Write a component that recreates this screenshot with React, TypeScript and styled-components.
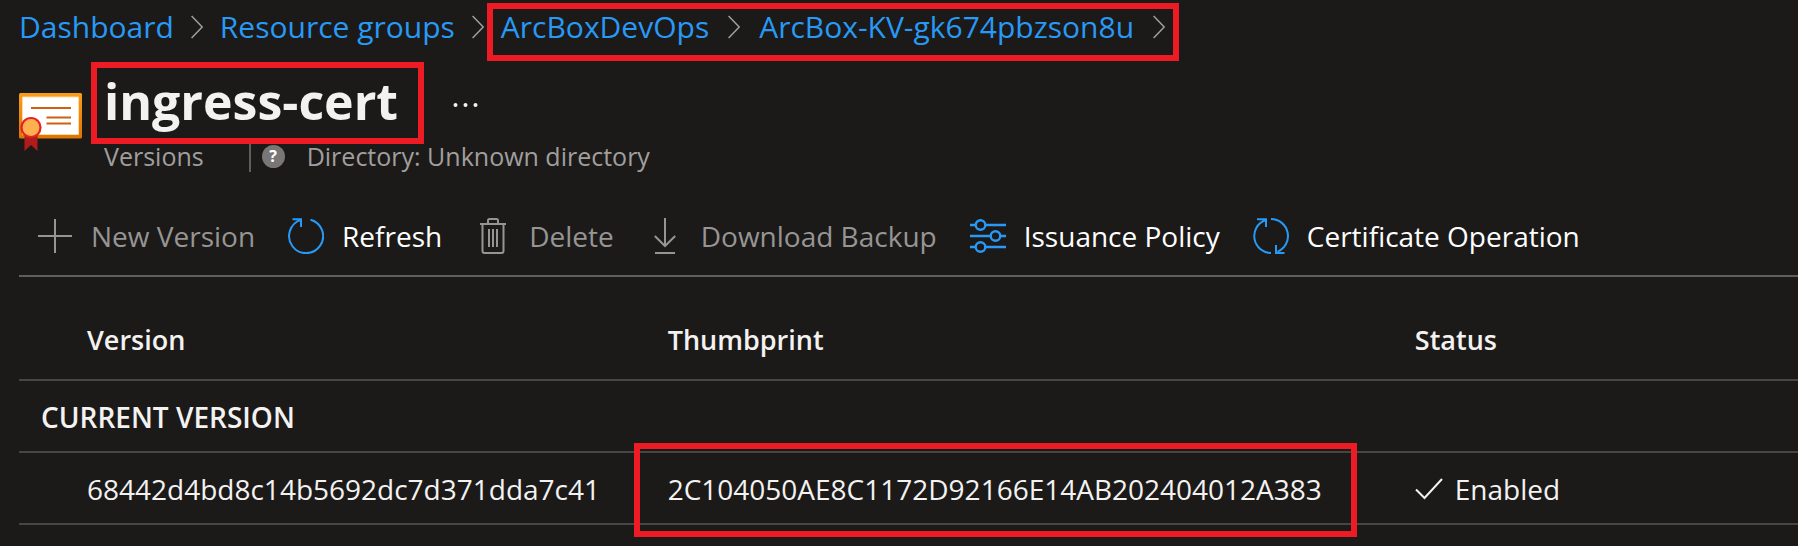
import React, { ReactNode } from "react";
import styled, { createGlobalStyle, css } from "styled-components";

const color = {
  page: "#1b1a19",
  text: "#f3f2f1",
  white: "#ffffff",
  muted: "#a19f9d",
  disabled: "#979593",
  link: "#2899f5",
  rule: "#605e5c",
  rowRule: "#484644",
  marker: "#ed1c24",
};

const GlobalStyle = createGlobalStyle`
  * { box-sizing: border-box; }
  body {
    margin: 0;
    background: ${color.page};
    color: ${color.text};
    font-family: "Open Sans", "Noto Sans", sans-serif;
    font-size: 28px;
    line-height: 38px;
  }
`;

const Page = styled.main`
  padding: 7px 0 20px 19px;
`;

/* Red frame drawn over the content it calls out. */
const marked = css<{ $frame: string }>`
  position: relative;
  &::after {
    content: "";
    position: absolute;
    inset: ${(p) => p.$frame};
    border: 6px solid ${color.marker};
    pointer-events: none;
  }
`;

const Breadcrumb = styled.nav`
  display: flex;
  align-items: center;
  gap: 17px;
  font-size: 30px;
  line-height: 40px;
  white-space: nowrap;
`;

const MarkedCrumbs = styled.div`
  display: flex;
  align-items: center;
  gap: 19px;
  ${marked}
`;

const Crumb = styled.a`
  color: ${color.link};
  text-decoration: none;
`;

const Header = styled.header`
  display: flex;
  align-items: flex-start;
  gap: 21px;
  margin-top: 24px;
`;

const CertIcon = styled.svg`
  flex: none;
  margin-top: 22px;
`;

const TitleRow = styled.div`
  display: flex;
  align-items: center;
  gap: 55px;
`;

const Title = styled.h1`
  margin: 0;
  font-size: 50px;
  font-weight: 700;
  line-height: 60px;
  white-space: nowrap;
  ${marked}
`;

const MoreButton = styled.button`
  display: flex;
  padding: 8px 0 0;
  border: 0;
  background: none;
  color: ${color.text};
`;

const Subtitle = styled.div`
  display: flex;
  align-items: center;
  margin-top: 9px;
  font-size: 25px;
  line-height: 30px;
  color: ${color.muted};
  white-space: nowrap;
`;

const Divider = styled.span`
  width: 2px;
  height: 28px;
  margin: 4px 11px 0 45px;
  background: ${color.rule};
`;

const HelpBadge = styled.button`
  display: flex;
  align-items: center;
  justify-content: center;
  width: 23px;
  height: 23px;
  margin-right: 22px;
  padding: 0;
  border: 0;
  border-radius: 50%;
  background: #797775;
  color: ${color.white};
  font: 700 16px/23px "Open Sans", "Noto Sans", sans-serif;
`;

const Toolbar = styled.div`
  display: flex;
  gap: 33px;
  margin-top: 45px;
  padding: 0 18px 20px;
  border-bottom: 2px solid ${color.rule};
`;

const Command = styled.button`
  display: flex;
  align-items: center;
  gap: 18px;
  padding: 0;
  border: 0;
  background: none;
  color: ${color.white};
  font: inherit;
  white-space: nowrap;

  svg { color: ${color.link}; }

  &:disabled,
  &:disabled svg { color: ${color.disabled}; }
`;

const Table = styled.table`
  width: 100%;
  table-layout: fixed;
  border-collapse: separate;
  border-spacing: 0;
`;

const Col = styled.col<{ $width?: string }>`
  width: ${(p) => p.$width ?? "auto"};
`;

const HeadCell = styled.th<{ $first?: boolean }>`
  padding: 44px 0 20px ${(p) => (p.$first ? "68px" : "26px")};
  border-bottom: 2px solid ${color.rowRule};
  font-size: 27px;
  font-weight: 600;
  text-align: left;
`;

const GroupCell = styled.th`
  padding: 17px 0 15px 22px;
  border-bottom: 2px solid ${color.rowRule};
  font-weight: 600;
  text-align: left;
`;

const Cell = styled.td<{ $first?: boolean }>`
  padding: 17px 0 15px ${(p) => (p.$first ? "68px" : "26px")};
  border-bottom: 2px solid ${color.rowRule};
  white-space: nowrap;
`;

const Thumbprint = styled.span`
  display: inline-block;
  ${marked}
`;

const Status = styled.span`
  display: flex;
  align-items: center;
  gap: 12px;
`;

const Chevron = () => (
  <svg width="12" height="24" viewBox="0 0 12 24" fill="none" stroke={color.muted} strokeWidth="1.5" aria-hidden="true">
    <path d="M.6 1 11.2 12 .6 23" />
  </svg>
);

const CertificateIcon = () => (
  <CertIcon width="64" height="58" viewBox="0 0 64 58" aria-hidden="true">
    <defs>
      <linearGradient id="frame" x1="0" y1="0" x2="0" y2="1">
        <stop offset="0" stopColor="#f99d1c" />
        <stop offset="1" stopColor="#dd7403" />
      </linearGradient>
    </defs>
    <rect width="63" height="45.500" rx="1.500" fill="url(#frame)" />
    <rect x="3" y="3.500" width="57" height="38.500" rx="1" fill="#ffd9a0" />
    <rect x="4" y="4.500" width="55" height="36.500" fill="#fff" />
    <path d="M12 15h40M27.500 24.500H52M27.500 30.500H52" stroke="#d0600f" strokeWidth="2.200" />
    <path d="M5.500 42h13v16L12 52l-6.500 6z" fill="#b01c1c" />
    <circle cx="12" cy="34.500" r="9.500" fill="#ffb04f" stroke="#e62323" strokeWidth="2.200" />
  </CertIcon>
);

const Icon = ({ children }: { children: ReactNode }) => (
  <svg width="36" height="36" viewBox="0 0 36 36" fill="none" stroke="currentColor" strokeWidth="2" aria-hidden="true">
    {children}
  </svg>
);

const icons = {
  add: <path d="M18 1v34M1 18h34" />,
  refresh: <path d="M22.500 1.700A17 17 0 1 1 13 1.900M4.500 1.200H13V9" />,
  trash: (
    <>
      <path d="M5 6h26M7.500 6v27q0 2 2 2h17q2 0 2-2V6M13 6V2.500q0-1.500 1.500-1.500h7q1.500 0 1.500 1.500V6" />
      <path d="M14 11v18M18 11v18M22 11v18" />
    </>
  ),
  download: <path d="M18 0v28M7.800 18 18 28 28.200 18M8 35h20" />,
  sliders: (
    <>
      <path d="M0 7h5.500M15.500 7H36M0 18h20.500M30.500 18H36M0 29h5.500M15.500 29H36" strokeWidth="2.400" />
      <g strokeWidth="2.400">
        <circle cx="10.500" cy="7" r="4.800" />
        <circle cx="25.500" cy="18" r="4.800" />
        <circle cx="10.500" cy="29" r="4.800" />
      </g>
    </>
  ),
  cycle: (
    <path d="M18 35A17 17 0 0 1 12 2.200M4 1.200H13V9M18 1A17 17 0 0 1 24.500 33.700M23 27v8H31.500" />
  ),
};

const commands: { label: string; icon: keyof typeof icons; disabled?: boolean }[] = [
  { label: "New Version", icon: "add", disabled: true },
  { label: "Refresh", icon: "refresh" },
  { label: "Delete", icon: "trash", disabled: true },
  { label: "Download Backup", icon: "download", disabled: true },
  { label: "Issuance Policy", icon: "sliders" },
  { label: "Certificate Operation", icon: "cycle" },
];

export default function App() {
  return (
    <>
      <GlobalStyle />
      <Page>
        <Breadcrumb aria-label="Breadcrumb">
          <Crumb href="#">Dashboard</Crumb>
          <Chevron />
          <Crumb href="#">Resource groups</Crumb>
          <Chevron />
          <MarkedCrumbs $frame="-4px -14px -14px -14px">
            <Crumb href="#">ArcBoxDevOps</Crumb>
            <Chevron />
            <Crumb href="#">ArcBox-KV-gk674pbzson8u</Crumb>
            <Chevron />
          </MarkedCrumbs>
        </Breadcrumb>

        <Header>
          <CertificateIcon />
          <div>
            <TitleRow>
              <Title $frame="-9px -26px -13px -13px">ingress-cert</Title>
              <MoreButton aria-label="More">
                <svg width="25" height="6" viewBox="0 0 25 6" fill="currentColor" aria-hidden="true">
                  <circle cx="2.500" cy="3" r="2" />
                  <circle cx="12.500" cy="3" r="2" />
                  <circle cx="22.500" cy="3" r="2" />
                </svg>
              </MoreButton>
            </TitleRow>
            <Subtitle>
              <span>Versions</span>
              <Divider />
              <HelpBadge>?</HelpBadge>
              <span>Directory: Unknown directory</span>
            </Subtitle>
          </div>
        </Header>

        <Toolbar role="toolbar">
          {commands.map((c) => (
            <Command key={c.label} disabled={c.disabled}>
              <Icon>{icons[c.icon]}</Icon>
              {c.label}
            </Command>
          ))}
        </Toolbar>

        <Table>
          <colgroup>
            <Col $width="35%" />
            <Col $width="42%" />
            <Col />
          </colgroup>
          <thead>
            <tr>
              <HeadCell scope="col" $first>Version</HeadCell>
              <HeadCell scope="col">Thumbprint</HeadCell>
              <HeadCell scope="col">Status</HeadCell>
            </tr>
          </thead>
          <tbody>
            <tr>
              <GroupCell colSpan={3} scope="rowgroup">CURRENT VERSION</GroupCell>
            </tr>
            <tr>
              <Cell $first>68442d4bd8c14b5692dc7d371dda7c41</Cell>
              <Cell>
                <Thumbprint $frame="-27px -35px -29px -34px">2C104050AE8C1172D92166E14AB202404012A383</Thumbprint>
              </Cell>
              <Cell>
                <Status>
                  <svg width="28" height="22" viewBox="0 0 28 22" fill="none" stroke="currentColor" strokeWidth="2" aria-hidden="true">
                    <path d="M1 11.500 9.500 20 27 1" />
                  </svg>
                  Enabled
                </Status>
              </Cell>
            </tr>
          </tbody>
        </Table>
      </Page>
    </>
  );
}
